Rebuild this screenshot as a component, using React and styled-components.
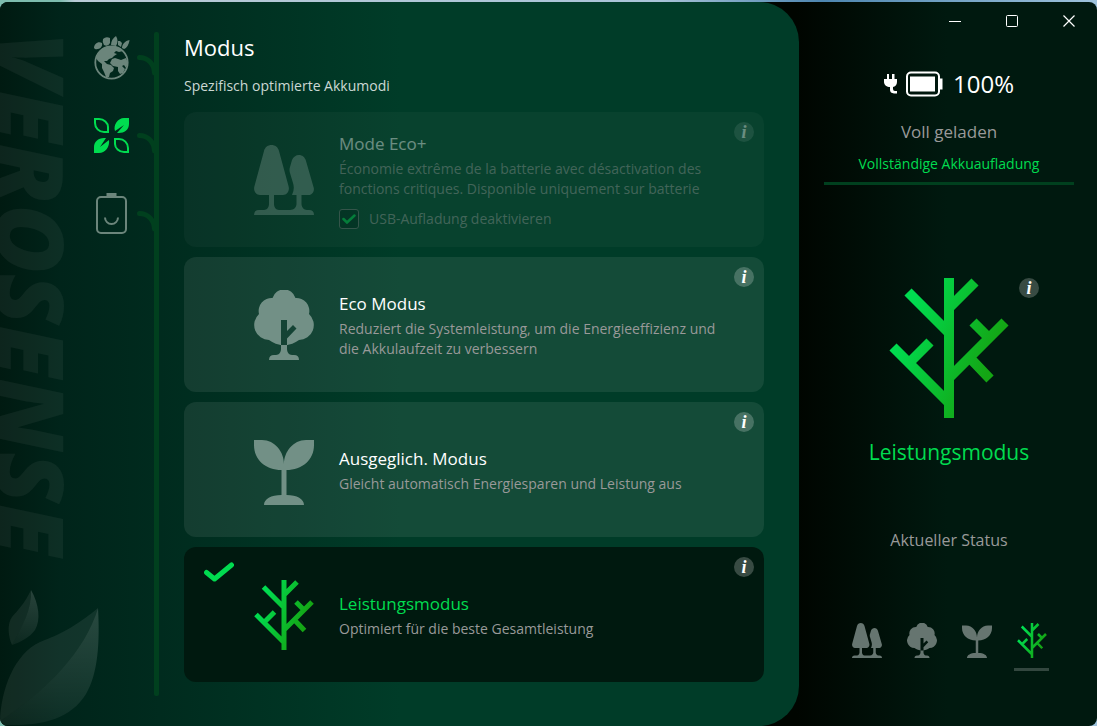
import { useId, useState } from 'react';
import styled, { createGlobalStyle } from 'styled-components';

const GlobalStyle = createGlobalStyle`
    * {
        box-sizing: border-box;
    }

    body {
        margin: 0;
        background: linear-gradient(to right, #7dbcae 60px, #b9cbd6 75px, #a9c4d8 60%, #4d86b0 75%, #9fc3dc);
        color: #fff;
        font-family: 'Open Sans', 'Noto Sans', sans-serif;
        font-size: 14px;
        line-height: 20px;
    }

    button {
        padding: 0;
        border: 0;
        background: none;
        color: inherit;
        font: inherit;
        cursor: pointer;
    }

    h1, h2, h3, p {
        margin: 0;
        font-weight: 400;
    }

    svg {
        display: block;
    }
`

const modes = [
    {
        id: 'ecoplus',
        title: 'Mode Eco+',
        text: 'Économie extrême de la batterie avec désactivation des fonctions critiques. Disponible uniquement sur batterie',
        option: 'USB-Aufladung deaktivieren',
        disabled: true,
        icon: PinesIcon,
    },
    {
        id: 'eco',
        title: 'Eco Modus',
        text: 'Reduziert die Systemleistung, um die Energieeffizienz und die Akkulaufzeit zu verbessern',
        icon: OakIcon,
    },
    {
        id: 'balanced',
        title: 'Ausgeglich. Modus',
        text: 'Gleicht automatisch Energiesparen und Leistung aus',
        icon: SproutIcon,
    },
    {
        id: 'performance',
        title: 'Leistungsmodus',
        text: 'Optimiert für die beste Gesamtleistung',
        icon: BranchIcon,
    },
]

const sections = [
    { id: 'earth', label: 'Umwelt', icon: EarthIcon },
    { id: 'modes', label: 'Modus', icon: LeavesIcon },
    { id: 'battery', label: 'Akku', icon: BatteryIcon },
]

export default function App() {
    const [mode, setMode] = useState('performance');
    const current = modes.find(item => item.id === mode);
    const CurrentIcon = current.icon;

    return (
        <>
            <GlobalStyle />
            <Window>
                <Panel>
                    <Brand>
                        <BrandName>VEROSENSE</BrandName>
                        <LeafDecor />
                    </Brand>
                    <Nav>
                        {sections.map(item => (
                            <NavItem key={item.id} $active={item.id === 'modes'} aria-label={item.label}>
                                <item.icon />
                                <Twig />
                            </NavItem>
                        ))}
                    </Nav>
                    <Rail />
                    <Content>
                        <Title>Modus</Title>
                        <Subtitle>Spezifisch optimierte Akkumodi</Subtitle>
                        <ModeList>
                            {modes.map(item => (
                                <ModeCard key={item.id} item={item} selected={item.id === mode} onSelect={() => setMode(item.id)} />
                            ))}
                        </ModeList>
                    </Content>
                </Panel>
                <Side>
                    <TitleBar>
                        <WindowButton aria-label='Minimieren'>
                            <svg width='12' height='12' stroke='#fff'><path d='M0 6.5H12' /></svg>
                        </WindowButton>
                        <WindowButton aria-label='Maximieren'>
                            <svg width='12' height='12' fill='none' stroke='#fff'><rect x='.5' y='.5' width='11' height='11' rx='1' /></svg>
                        </WindowButton>
                        <WindowButton aria-label='Schließen'>
                            <svg width='12' height='12' stroke='#fff' strokeWidth='1.2'><path d='M.5 .5L11.5 11.5M11.5 .5L.5 11.5' /></svg>
                        </WindowButton>
                    </TitleBar>
                    <Charge>
                        <PlugIcon />
                        <ChargeIcon />
                        <Percent>100%</Percent>
                    </Charge>
                    <ChargeState>Voll geladen</ChargeState>
                    <ChargeNote>Vollständige Akkuaufladung</ChargeNote>
                    <Current>
                        <CurrentIcon size={120} />
                        <InfoButton aria-label='Info'>i</InfoButton>
                    </Current>
                    <CurrentName>{current.title}</CurrentName>
                    <StatusLabel>Aktueller Status</StatusLabel>
                    <StatusRow>
                        {modes.map(item => (
                            <StatusButton key={item.id} aria-label={item.title} $current={item.id === mode} onClick={() => setMode(item.id)}>
                                <item.icon size={30} />
                            </StatusButton>
                        ))}
                    </StatusRow>
                </Side>
            </Window>
        </>
    )
}

function ModeCard({item, selected, onSelect}) {
    const optionId = useId();
    return (
        <Card $selected={selected} $disabled={item.disabled}>
            <Tick>
                {selected && (
                    <svg width='30' height='20' viewBox='0 0 30 20' fill='none' stroke='#00dc50' strokeWidth='5' strokeLinecap='round' strokeLinejoin='round'>
                        <path d='M2.5 10.5L10.5 17L27.5 3' />
                    </svg>
                )}
            </Tick>
            <CardIcon $disabled={item.disabled}>
                <item.icon size={60} />
            </CardIcon>
            <CardBody $disabled={item.disabled}>
                <CardTitle $selected={selected}>
                    <button type='button' disabled={item.disabled} onClick={onSelect}>{item.title}</button>
                </CardTitle>
                <CardText>{item.text}</CardText>
                {item.option && (
                    <Option>
                        <CheckWrap>
                            <Check id={optionId} type='checkbox' defaultChecked disabled />
                            <svg width='14' height='10' viewBox='0 0 14 10' fill='none' stroke='#00dc50' strokeWidth='2.5' strokeLinecap='round'>
                                <path d='M1.5 5L5 8.5L12.5 1.5' />
                            </svg>
                        </CheckWrap>
                        <label htmlFor={optionId}>{item.option}</label>
                    </Option>
                )}
            </CardBody>
            <InfoButton aria-label='Info' $disabled={item.disabled}>i</InfoButton>
        </Card>
    )
}

function ModeSvg({size, children}) {
    return (
        <svg width={size} height={size * 7 / 6} viewBox='0 0 60 70' fill='currentColor'>
            {children}
        </svg>
    )
}

function PinesIcon({size}) {
    return (
        <ModeSvg size={size}>
            <path d='M17.5 0C21 0 24 2 25 6L34.5 41C36 46 33 50 29 50H20V59C20 62 22 65 25 65H36C40 65 42.5 62 42.5 59V50H38Q41 44 39 38L36 28Q35 25 36 22L38 15C39 12 42 10 45 10C48 10 51 12 52 16L59.5 42C61 46 58 50 55 50H47.5V59C47.5 62 50 65 53 65H55Q60 65 60 70H0Q0 65 5 65H10C13 65 15 62 15 59V50H6C2 50 -1 46 .5 41L10 6C11 2 14 0 17.5 0Z' />
        </ModeSvg>
    )
}

function OakIcon({size}) {
    return (
        <ModeSvg size={size}>
            <path fillRule='evenodd' d='M18.5 8A12 12 0 0 1 41.5 8A13 13 0 0 1 55 24A15 15 0 0 1 45 50C41 53 36 55 30 55C24 55 19 53 15 50A15 15 0 0 1 5 24A13 13 0 0 1 18.5 8ZM27 30V55H33V48.5L42.5 38.5L39 35L33 41V30Z' />
            <path d='M27 55H33V59C33 62 35 65 38 65H40Q45 65 45 70H15Q15 65 20 65H22C25 65 27 62 27 59Z' />
        </ModeSvg>
    )
}

function SproutIcon({size}) {
    return (
        <ModeSvg size={size}>
            <path d='M0 5H8C21 5 30 17 30 29C30 17 39 5 52 5H60V10C60 25 48 35 32.5 35V60C43 60 50 64 50 70H10C10 64 17 60 27.5 60V35C12 35 0 25 0 10Z' />
        </ModeSvg>
    )
}

function BranchIcon({size}) {
    const id = useId();
    return (
        <ModeSvg size={size}>
            <linearGradient id={id} gradientUnits='userSpaceOnUse' x1='8' y1='22' x2='52' y2='40'>
                <stop offset='0' stopColor='#00dc50' />
                <stop offset='1' stopColor='#14a514' />
            </linearGradient>
            <path
                fill='none'
                stroke={`url(#${id})`}
                strokeWidth='5'
                d='M30 0V70M9.5 7L30 27.5M43 2L30 15M58 22L30 50M42 22L49.5 29.5M40.5 40L50.5 50.5M2 34.5L30 62.5M20.5 32L11 41.5'
            />
        </ModeSvg>
    )
}

function EarthIcon() {
    return (
        <svg width='36' height='44' viewBox='0 0 36 44' fill='currentColor'>
            <circle cx='17.5' cy='26.5' r='16.2' fill='none' stroke='currentColor' strokeWidth='1.8' />
            <path d='M5 16L9 12L14 10L20 10L26 12L29 15L25 16L22 15L20 17L23 18L20 20L18 22L15 23L13 25L10 25L13 28L17 29L20 32L19 35L16 37L15 41L12 41L10 36L8 32L8 28L4 25L2 22Z' />
            <path d='M18 23L21 22L27 24L32 22L34 27L32 32L30 29L28 30L31 33L29 37L26 38L24 35L24 31L19 30L16 27Z' />
            <path d='M0 12C0 8 4 5 8 7C9 11 5 14 1 13Z' />
            <path d='M9 3Q12 0 16 2L16 7Q14 11 10 9Q8 6 9 3Z' />
            <path d='M17 9C17 5 19 2 22 0C24 3 24 7 22 10Z' />
            <path d='M24 5L26 5L28 7L27 11L24 9Z' />
            <path d='M28 12C28 8 31 5 35.5 4C35 8 33 12 30 13Z' />
        </svg>
    )
}

function LeavesIcon() {
    return (
        <svg width='36' height='36' viewBox='0 0 36 36' fill='currentColor'>
            <path d='M1 1H5C10 1 14 5 14 9V14H10C5 14 1 10 1 5Z' fill='none' stroke='currentColor' strokeWidth='2' />
            <path d='M34 34H30C25 34 21 30 21 26V21H25C30 21 34 25 34 30Z' fill='none' stroke='currentColor' strokeWidth='2' />
            <path d='M35 0V6C35 12 30 15 25 15H23L30 7L21 13C19 7 24 0 30 0Z' />
            <path d='M0 35V29C0 24 4 20 10 20H12L6 29L15 22C16 29 11 35 5 35Z' />
        </svg>
    )
}

function BatteryIcon() {
    return (
        <svg width='36' height='42' viewBox='0 0 36 42' fill='none' stroke='currentColor' strokeWidth='2'>
            <rect x='3' y='4' width='29' height='36' rx='4' />
            <path d='M12.5 1.5H22.5' strokeWidth='3' />
            <path d='M11 24.5A6.5 6.5 0 0 0 24 24.5' />
        </svg>
    )
}

function PlugIcon() {
    return (
        <svg width='14' height='20' viewBox='0 0 14 20' fill='#fff'>
            <path d='M3 0H5V5H8V0H10.5V5H13V8C13 11 11 12.5 9 13V15Q9 17 11 17H13V19.5H10Q6 19 6 16V13C3 13 0 11 0 8V5H3Z' />
        </svg>
    )
}

function ChargeIcon() {
    return (
        <svg width='37' height='26' viewBox='0 0 37 26' fill='none'>
            <rect x='1' y='1.5' width='32' height='23' rx='4' stroke='#fff' strokeWidth='2' />
            <path d='M4 5.5H29V20.5H4ZM34 7.5H36.5V18.5H34Z' fill='#fff' />
        </svg>
    )
}

function LeafDecor() {
    const id = useId();
    return (
        <svg width='100' height='136' viewBox='0 0 100 136'>
            <linearGradient id={id} x1='0' y1='0' x2='0' y2='1'>
                <stop offset='0' stopColor='#fff' stopOpacity='.16' />
                <stop offset='1' stopColor='#fff' stopOpacity='.05' />
            </linearGradient>
            <path fill='#fff' fillOpacity='.07' d='M31 0C32 20 22 36 12 55C8 46 7 34 12 27C18 20 25 13 31 0ZM98 18C85 62 45 102 0 131C1 100 14 64 40 52C62 44 80 33 98 18Z' />
            <path fill={`url(#${id})`} d='M31 0C39 14 41 30 35 40C30 47 21 52 12 55C22 36 32 20 31 0Z' />
            <path fill={`url(#${id})`} d='M98 18C100 52 98 84 86 104C70 130 40 136 5 135L0 131C45 102 85 62 98 18Z' />
        </svg>
    )
}

function Twig() {
    return (
        <svg width='17' height='40' viewBox='0 0 17 40' fill='none' stroke='#00401e' strokeWidth='5' strokeLinecap='round'>
            <path d='M2.5 19.5C10 19.500 17 25 17.5 35' />
        </svg>
    )
}

const Window = styled.div`
    display: flex;
    min-height: calc(100vh - 2px);
    margin-top: 2px;
    border-radius: 8px;
    overflow: hidden;
    background: linear-gradient(to left, #00190f 150px, #000500 300px);
`

const Panel = styled.main`
    flex: 1;
    display: flex;
    border-radius: 0 40px 40px 0;
    background: linear-gradient(to right, #001a11 0, #00241a 60px, #002b1e 160px, #003c28 400px);
`

const Brand = styled.div`
    flex: none;
    width: 94px;
    display: flex;
    flex-direction: column;
    justify-content: space-between;

    & svg {
        flex: none;
    }
`

const BrandName = styled.div`
    width: 64px;
    padding-top: 30px;
    writing-mode: vertical-rl;
    white-space: nowrap;
    color: rgba(255, 255, 255, 0.05);
    font-size: 94px;
    font-weight: 800;
    font-style: italic;
    line-height: 64px;
`

const Nav = styled.nav`
    flex: none;
    display: flex;
    flex-direction: column;
    gap: 34px;
    width: 60px;
    padding-top: 34px;
`

const NavItem = styled.button`
    display: flex;
    align-items: center;
    justify-content: space-between;
    height: 44px;
    color: ${props => props.$active ? '#00dc50' : '#6b857b'};
`

const Rail = styled.div`
    flex: none;
    width: 5px;
    margin: 30px 0;
    border-radius: 2px;
    background: #00401e;
`

const Content = styled.section`
    flex: 1;
    padding: 32px 35px 44px 25px;
`

const Title = styled.h1`
    font-size: 22px;
    line-height: 26px;
`

const Subtitle = styled.p`
    margin: 16px 0;
    color: #ccd8d4;
`

const ModeList = styled.div`
    display: flex;
    flex-direction: column;
    gap: 10px;
`

const Card = styled.article`
    display: flex;
    min-height: 135px;
    padding: 10px;
    border-radius: 12px;
    background: ${props => props.$selected ? '#00190f' : props.$disabled ? 'rgba(255, 255, 255, 0.03)' : 'rgba(255, 255, 255, 0.08)'};
`

const Tick = styled.div`
    width: 60px;
    padding: 5px 10px;
`

const CardIcon = styled.div`
    align-self: center;
    margin-right: 25px;
    color: #729086;
    opacity: ${props => props.$disabled ? 0.4 : 1};
`

const CardBody = styled.div`
    flex: 1;
    align-self: center;
    padding-right: 10px;
    opacity: ${props => props.$disabled ? 0.4 : 1};
`

const CardTitle = styled.h2`
    margin-bottom: 2px;
    color: ${props => props.$selected ? '#00dc50' : '#fff'};
    font-size: 17px;
    line-height: 26px;

    & button {
        display: block;
    }
`

const CardText = styled.p`
    color: #999;
`

const Option = styled.div`
    display: flex;
    align-items: center;
    gap: 10px;
    margin-top: 10px;
    color: #999;
`

const CheckWrap = styled.span`
    display: grid;
    place-items: center;

    & > * {
        grid-area: 1 / 1;
    }
`

const Check = styled.input`
    appearance: none;
    width: 20px;
    height: 20px;
    margin: 0;
    border: 1px solid #777;
    border-radius: 3px;
    background: #002a1c;
`

const InfoButton = styled.button`
    && {
        flex: none;
        width: 20px;
        height: 20px;
        border-radius: 50%;
        background: rgba(255, 255, 255, 0.22);
        color: #fff;
        font: italic 700 18px/20px 'Liberation Serif', serif;
        text-align: center;
        opacity: ${props => props.$disabled ? 0.4 : 1};
    }
`

const Side = styled.aside`
    flex: none;
    width: 298px;
    padding-left: 2px;
    display: flex;
    flex-direction: column;
    align-items: center;
`

const TitleBar = styled.div`
    align-self: flex-end;
    display: flex;
`

const WindowButton = styled.button`
    display: grid;
    place-items: center;
    width: 57px;
    height: 38px;
`

const Charge = styled.div`
    display: flex;
    align-items: center;
    gap: 8px;
    height: 32px;
    margin-top: 28px;
`

const Percent = styled.span`
    margin-left: 2px;
    font-size: 24px;
`

const ChargeState = styled.p`
    margin-top: 20px;
    color: #999;
    font-size: 17px;
    line-height: 24px;
`

const ChargeNote = styled.p`
    width: 250px;
    padding: 10px 0 8px;
    border-bottom: 3px solid #00401e;
    color: #00dc50;
    text-align: center;
`

const Current = styled.div`
    display: grid;
    grid-template-columns: 20px 120px 20px;
    gap: 10px;
    margin-top: 93px;

    & svg {
        grid-column: 2;
    }
`

const CurrentName = styled.h2`
    margin-top: 20px;
    color: #00dc50;
    font-size: 21px;
    line-height: 28px;
`

const StatusLabel = styled.h3`
    margin-top: 62px;
    color: #999;
    font-size: 16px;
    line-height: 24px;
`

const StatusRow = styled.div`
    display: flex;
    gap: 20px;
    margin-top: 71px;
`

const StatusButton = styled.button`
    && {
        display: grid;
        justify-content: center;
        width: 35px;
        padding-bottom: 10px;
        border-bottom: 3px solid ${props => props.$current ? '#33473f' : 'transparent'};
        color: #667570;
    }
`
